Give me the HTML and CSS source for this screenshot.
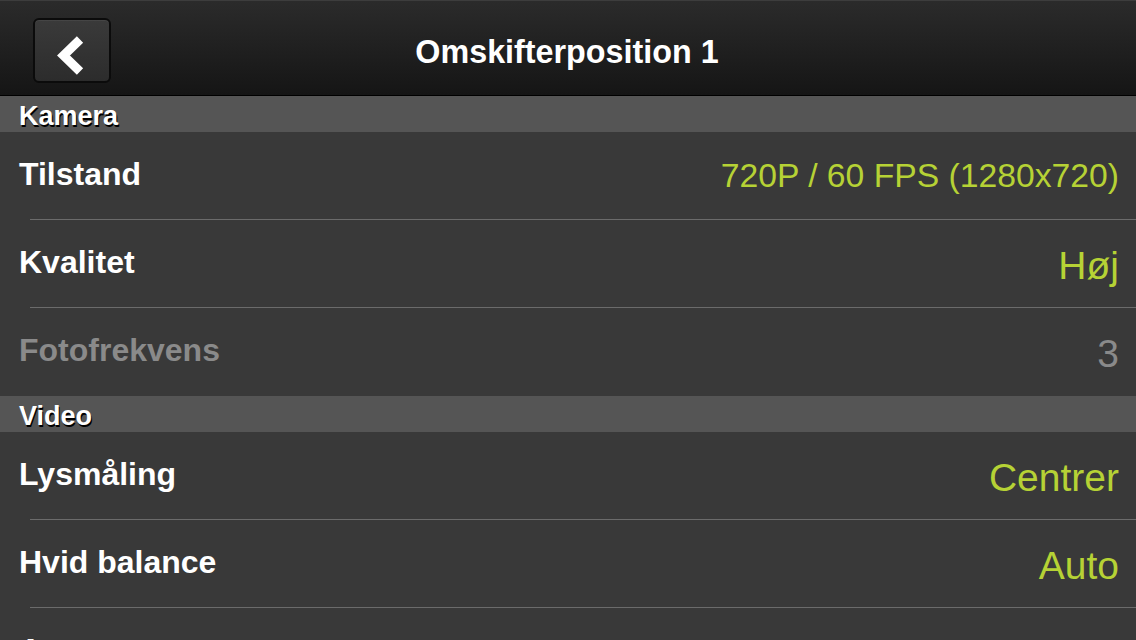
FILE: index.html
```html
<!DOCTYPE html>
<html lang="da">
<head>
<meta charset="utf-8">
<title>Omskifterposition 1</title>
<link rel="stylesheet" href="styles.css">
</head>
<body>
<div class="screen">
  <header class="navbar">
    <button class="back" type="button" aria-label="Tilbage">
      <svg width="74" height="61" viewBox="0 0 74 61" aria-hidden="true">
        <polyline points="45,19.5 28.5,35.5 45,51.5" fill="none" stroke="#fff" stroke-width="9" stroke-linejoin="miter" stroke-miterlimit="4"/>
      </svg>
    </button>
    <h1 class="title">Omskifterposition 1</h1>
  </header>

  <section class="group">
    <div class="group-head">Kamera</div>
    <div class="row">
      <span class="label">Tilstand</span>
      <span class="value value--small">720P / 60 FPS (1280x720)</span>
    </div>
    <div class="row">
      <span class="label">Kvalitet</span>
      <span class="value">Høj</span>
    </div>
    <div class="row row--last row--disabled">
      <span class="label">Fotofrekvens</span>
      <span class="value">3</span>
    </div>
  </section>

  <section class="group">
    <div class="group-head">Video</div>
    <div class="row">
      <span class="label">Lysmåling</span>
      <span class="value">Centrer</span>
    </div>
    <div class="row">
      <span class="label">Hvid balance</span>
      <span class="value">Auto</span>
    </div>
    <div class="row">
      <span class="label">Avanceret</span>
      <span class="value value--plain">›</span>
    </div>
  </section>
</div>
</body>
</html>
```

FILE: styles.css
```css
html, body {
  margin: 0;
  padding: 0;
  background: #393939;
}

body {
  font-family: "Liberation Sans", Arial, Helvetica, sans-serif;
  color: #fff;
  overflow: hidden;
  height: 640px;
}

.screen {
  width: 1136px;
  height: 640px;
  overflow: hidden;
  background: #393939;
}

.navbar {
  position: relative;
  box-sizing: border-box;
  height: 96px;
  border-top: 1px solid #3d3d3d;
  border-bottom: 1px solid #000;
  background: linear-gradient(#2b2b2b, #151515);
  display: flex;
  align-items: center;
  justify-content: center;
}

.back {
  position: absolute;
  left: 33px;
  top: 17px;
  width: 78px;
  height: 65px;
  box-sizing: border-box;
  padding: 0;
  margin: 0;
  border: 2px solid #0b0b0b;
  border-radius: 6px;
  background: linear-gradient(#3a3a3a, #2c2c2c);
  box-shadow: inset 0 1px 0 rgba(255,255,255,0.06);
  display: flex;
  align-items: center;
  justify-content: center;
}

.back svg {
  display: block;
}

.title {
  margin: 0 0 0 -2px;
  padding-top: 8px;
  font-size: 32.3px;
  font-weight: bold;
  color: #fff;
}

.group-head {
  height: 36px;
  box-sizing: border-box;
  padding: 2px 0 0 19px;
  background: #555;
  font-size: 27px;
  font-weight: bold;
  line-height: 36px;
  color: #fff;
  text-shadow: 1px 2px 0 #000;
  overflow: hidden;
}

.row {
  height: 88px;
  box-sizing: border-box;
  padding: 0 17px 3px 19px;
  display: flex;
  align-items: center;
  justify-content: space-between;
  background-image: linear-gradient(#6b6b6b, #6b6b6b);
  background-size: calc(100% - 30px) 1px;
  background-position: right bottom;
  background-repeat: no-repeat;
}

.row--last {
  background-image: none;
}

.label {
  font-size: 32px;
  font-weight: bold;
  color: #fff;
}

.value {
  font-size: 39px;
  color: #b6d235;
  position: relative;
  top: 3px;
}

.value--small {
  font-size: 33.7px;
  top: 1px;
}

.value--plain {
  color: #fff;
}

.row--disabled .label,
.row--disabled .value {
  color: #8a8a8a;
}
```
